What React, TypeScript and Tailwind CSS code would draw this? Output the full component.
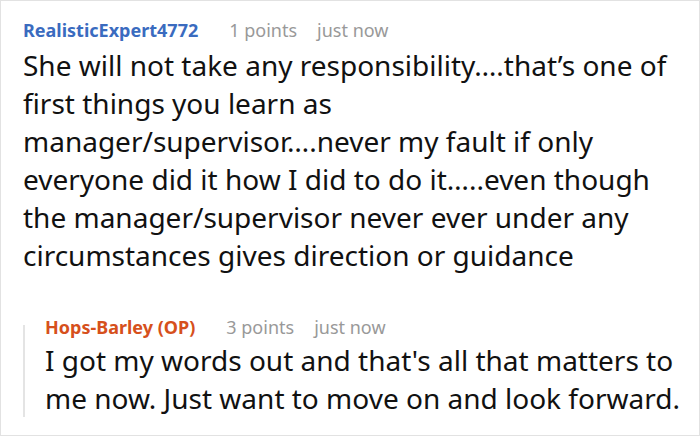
const mainLines = [
  "She will not take any responsibility\u2026.that\u2019s one of",
  "first things you learn as",
  "manager/supervisor\u2026.never my fault if only",
  "everyone did it how I did to do it\u2026..even though",
  "the manager/supervisor never ever under any",
  "circumstances gives direction or guidance",
];

const replyLines = [
  "I got my words out and that's all that matters to",
  "me now. Just want to move on and look forward.",
];

function Meta({ name, points, color }: { name: string; points: string; color: string }) {
  return (
    <div className="flex items-center text-[18px] leading-[26px]">
      <span className={`font-bold ${color}`}>{name}</span>
      <span className="ml-[31px] text-[#999999]">{points}</span>
      <span className="ml-[20px] text-[#999999]">just now</span>
    </div>
  );
}

export default function App() {
  return (
    <div
      className="w-[700px] h-[436px] bg-white border border-[#e2e2e2] overflow-hidden text-[#111111]"
      style={{ fontFamily: '"Noto Sans", "Open Sans", sans-serif' }}
    >
      <div className="pl-[22px] pt-[16px]">
        <Meta name="RealisticExpert4772" points="1 points" color="text-[#3a6bbf]" />
        <div className="mt-[3px] text-[28px] leading-[38px]">
          {mainLines.map((l) => (
            <div key={l} className="whitespace-nowrap">
              {l}
            </div>
          ))}
        </div>
        {/* reply */}
        <div className="mt-[40px] flex">
          <div className="mt-[11px] w-[2px] bg-[#e4e4e4]" />
          <div className="pl-[20px]">
            <Meta name="Hops-Barley (OP)" points="3 points" color="text-[#d6501c]" />
            <div className="mt-[1px] text-[28px] leading-[38px]">
              {replyLines.map((l) => (
                <div key={l} className="whitespace-nowrap">
                  {l}
                </div>
              ))}
            </div>
          </div>
        </div>
      </div>
    </div>
  );
}
